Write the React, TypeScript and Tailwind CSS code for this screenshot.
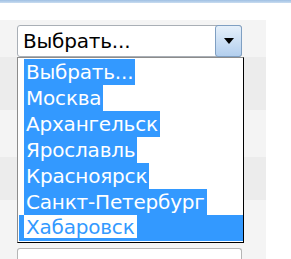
import React from "react";

const cities = ["Выбрать...", "Москва", "Архангельск", "Ярославль", "Красноярск", "Санкт-Петербург"];

export default function App() {
  return (
    <div className="w-[291px] h-[259px] overflow-hidden bg-white" style={{ fontFamily: '"DejaVu Sans", sans-serif' }}>
      <div className="h-[3px] bg-gradient-to-b from-[#9fc0e3] to-[#c9dcf0]" />
      <div className="h-[17px] bg-white" />
      <div className="relative w-[266px] flex flex-col">
        <div className="h-[37px] bg-[#f4f4f4] px-[17px] pt-[5px]">
          <div className="flex h-[32px] w-[225px] rounded-[3px] border border-[#a9afb6] bg-white">
            <div className="flex-1 pl-[5px] text-[20px] leading-[30px] tracking-[-0.2px] text-black">Выбрать...</div>
            <div className="flex w-[27px] items-center justify-center rounded-[3px] border border-[#7f9fc2] bg-gradient-to-b from-[#e6f0fa] to-[#b3cfee] -m-px">
              <svg width="10" height="6" viewBox="0 0 10 6">
                <polygon points="0,0 10,0 5,6" fill="#000" />
              </svg>
            </div>
          </div>
        </div>
        <div className="h-[53px] bg-[#ececec]" />
        <div className="h-[47px] bg-[#f4f4f4]" />
        <div className="h-[43px] bg-[#ececec]" />
        <div className="h-[45px] bg-[#f4f4f4]" />
        <div className="h-[20px] bg-[#f4f4f4] px-[17px] pt-[3px]">
          <div className="h-[20px] w-[225px] rounded-t-[3px] border border-b-0 border-[#b5b5b5] bg-white" />
        </div>

        <div className="absolute left-[17px] top-[37px] w-[227px] border border-[#8c8c8c] border-r-black border-b-black bg-white py-px pl-px">
          {cities.map((c) => (
            <div key={c} className="h-[26px] pl-[5px]">
              <span className="inline-block h-[26px] bg-[#3399ff] px-[2px] text-[20px] leading-[26px] tracking-[-0.2px] text-white">{c}</span>
            </div>
          ))}
          <div className="h-[26px] bg-[#3399ff] pl-[5px]">
            <span className="inline-block h-[23px] bg-white px-[2px] text-[20px] leading-[24px] tracking-[-0.2px] text-[#3399ff]">Хабаровск</span>
          </div>
        </div>
      </div>
    </div>
  );
}
